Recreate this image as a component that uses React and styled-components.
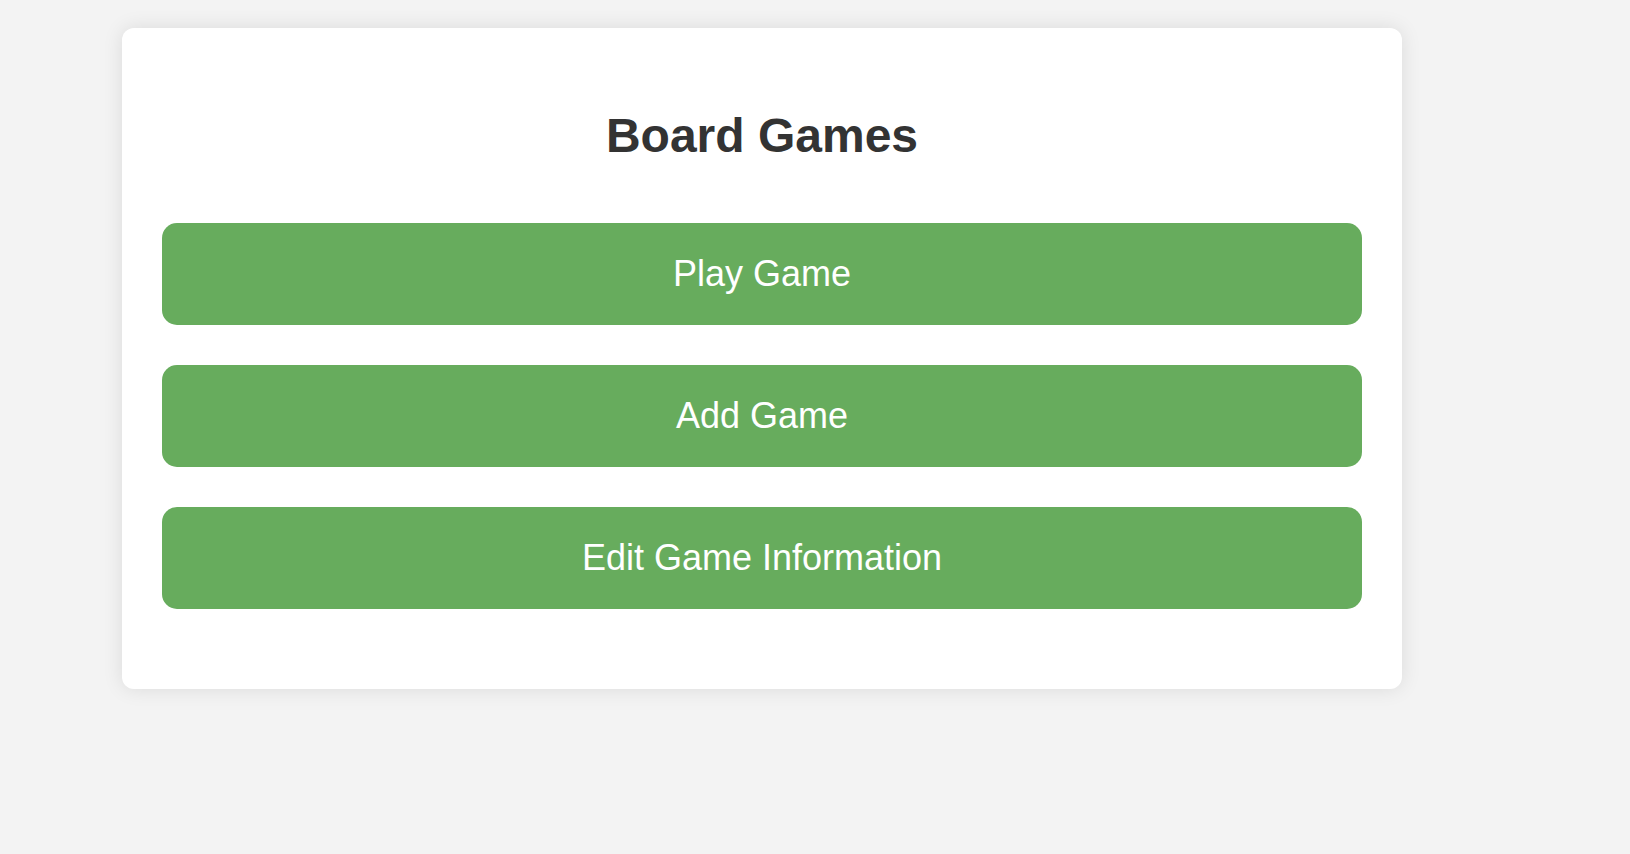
import React from 'react';
import styled, { createGlobalStyle } from 'styled-components';

const GlobalStyle = createGlobalStyle`
  html, body {
    margin: 0;
    padding: 0;
    background: #f3f3f3;
    font-family: "Liberation Sans", Arial, Helvetica, sans-serif;
  }
`

const Page = styled("div")`
  min-height: 854px;
  padding: 28px 0 0 122px;
  box-sizing: border-box;
`

const Card = styled("div")`
  width: 1280px;
  box-sizing: border-box;
  background: #fff;
  border-radius: 12px;
  box-shadow: 0 0 20px rgba(0, 0, 0, 0.1);
  padding: 40px 40px 80px;
  display: flex;
  flex-direction: column;
`

const Title = styled("h1")`
  margin: 40px 0 59px;
  text-align: center;
  font-size: 48px;
  line-height: 56px;
  font-weight: bold;
  color: #333;
`

const ButtonList = styled("div")`
  display: flex;
  flex-direction: column;
  gap: 40px;
`

const MenuButton = styled("button")`
  display: block;
  width: 100%;
  border: none;
  border-radius: 15px;
  background: #67ac5d;
  color: #fff;
  font-family: inherit;
  font-size: 36px;
  line-height: 42px;
  padding: 30px 0 30px;
  cursor: pointer;
`

const items = ["Play Game", "Add Game", "Edit Game Information"]

export default function App() {
  return (
    <Page>
      <GlobalStyle />
      <Card>
        <Title>Board Games</Title>
        <ButtonList>
          {items.map(label => (
            <MenuButton key={label}>{label}</MenuButton>
          ))}
        </ButtonList>
      </Card>
    </Page>
  )
}
